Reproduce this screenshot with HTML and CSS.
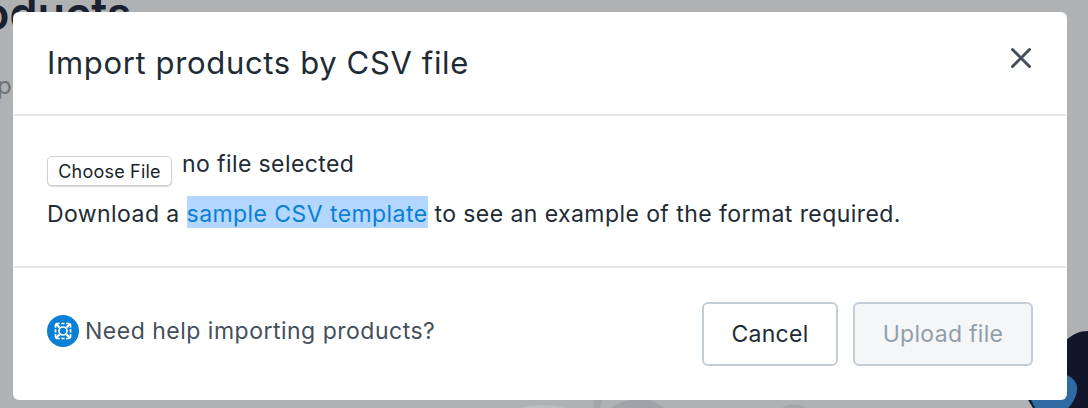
FILE: index.html
```html
<!DOCTYPE html>
<html lang="en">
<head>
<meta charset="utf-8">
<title>Import products by CSV file</title>
<link rel="stylesheet" href="styles.css">
</head>
<body>
<div class="backdrop" aria-hidden="true">
  <span class="bg-heading">oducts</span>
  <span class="bg-sub">p</span>
  <svg class="bg-art" viewBox="500 320 588 88" width="588" height="88">
    <path d="M1088 331 C1080 331 1072 334 1064 342 L1064 398 L1027 398 L1033 408 L1088 408 Z" fill="#12162a"/>
    <path d="M1060 372 C1072 376 1078 382 1077 390 C1076 398 1072 404 1068 408 L1035 408 L1030 398 Z" fill="#2f6aa3"/>
    <path d="M611 408 C620 401 632 399 640 399 C650 399 658 403 664 408 Z" fill="#a0a2a6"/>
    <path d="M782 408 C788 403 800 403 806 408 Z" fill="#a3a5a9"/>
    <path d="M593 398 H603 L600 408 H594 Z" fill="#a3a5a9"/>
    <path d="M520 408 C535 404 550 404 565 408 Z" fill="#bcbdbf"/>
  </svg>
</div>
<main class="modal">
  <header class="modal-head">
    <h1 class="modal-title">Import products by CSV file</h1>
    <button class="close" aria-label="Close">
      <svg viewBox="0 0 22 22" width="22" height="22"><path d="M2.5 2.5 L19.5 19.5 M19.5 2.5 L2.5 19.5" stroke="#454f5b" stroke-width="3" stroke-linecap="round" fill="none"/></svg>
    </button>
  </header>
  <section class="modal-body">
    <div class="file-row"><span class="file-btn">Choose File</span><span class="file-state">no file selected</span></div>
    <p class="hint">Download a <a class="link" href="#">sample CSV template</a> to see an example of the format required.</p>
  </section>
  <footer class="modal-foot">
    <div class="help">
      <svg class="help-icon" viewBox="0 0 32 32" width="32" height="32">
        <circle cx="16" cy="16" r="16" fill="#0a7fd6"/>
        <g fill="none" stroke="#fff" stroke-width="1.7">
          <circle cx="16" cy="16" r="4"/>
          <path d="M9.5 8.5 H22.5 M9.5 23.5 H22.5 M8.5 9.5 V22.5 M23.5 9.5 V22.5" stroke-dasharray="3.2 1.6"/>
          <path d="M8.5 8.5 L12.5 12.5 M23.5 8.5 L19.5 12.5 M8.5 23.5 L12.5 19.5 M23.5 23.5 L19.5 19.5" stroke-width="2.2"/>
        </g>
      </svg>
      <span class="help-text">Need help importing products?</span>
    </div>
    <div class="actions">
      <button class="btn">Cancel</button>
      <button class="btn btn-disabled" disabled>Upload file</button>
    </div>
  </footer>
</main>
</body>
</html>
```

FILE: styles.css
```css
* { box-sizing: border-box; }
html, body { margin: 0; height: 408px; overflow: hidden; }
body {
  background: #b0b1b3;
  font-family: Inter, "Liberation Sans", sans-serif;
  color: #212b36;
  padding: 12px 21px 8px 13px;
}
.backdrop { position: absolute; inset: 0; overflow: hidden; }
.bg-heading {
  position: absolute; left: -18px; top: -21px;
  font-size: 45px; font-weight: 600; color: #1b2030; line-height: 70px;
}
.bg-sub { position: absolute; left: -3px; top: 72px; font-size: 24px; line-height: 28px; color: #6f7278; }
.bg-art { position: absolute; right: 0; bottom: 0; display: block; }
.modal {
  position: relative;
  height: 388px;
  background: #fff;
  border-radius: 6px;
  display: flex;
  flex-direction: column;
}
.modal-head {
  height: 104px;
  padding: 0 34px;
  display: flex;
  align-items: center;
  justify-content: space-between;
  border-bottom: 2px solid #e6e7e8;
}
.modal-title { margin: 0; font-size: 31px; font-weight: 400; line-height: 40px; letter-spacing: .65px; }
.close { border: 0; background: none; padding: 0; display: flex; margin-right: 1px; margin-top: -10px; }
.modal-body {
  height: 152px;
  padding: 32px 34px 0;
  border-bottom: 2px solid #e6e7e8;
}
.file-row { display: flex; align-items: flex-start; height: 40px; }
.file-btn {
  margin-top: 8px;
  width: 125px; height: 30px;
  border: 1px solid #d0d1d3;
  border-radius: 5px;
  background: #fff;
  box-shadow: 0 1px 1px rgba(0,0,0,.15);
  font-size: 18px;
  letter-spacing: .2px;
  line-height: 30px;
  text-align: center;
  color: #1a1f26;
}
.file-state { margin-left: 10px; font-size: 23px; letter-spacing: .4px; line-height: 32px; }
.hint { margin: 8px 0 0; font-size: 23px; letter-spacing: .43px; line-height: 36px; }
.link { color: #0a7fd6; background: #b3d7ff; text-decoration: none; padding-top: 4px; }
.modal-foot {
  flex: 1;
  padding: 0 34px;
  display: flex;
  align-items: center;
  justify-content: space-between;
}
.help { display: flex; align-items: center; gap: 6px; margin-top: -6px; }
.help-icon { display: block; }
.help-text { font-size: 23px; letter-spacing: .5px; color: #454f5b; line-height: 30px; }
.actions { display: flex; gap: 15px; margin-top: -1px; }
.btn {
  height: 64px;
  width: 136px;
  border: 2px solid #c4cdd5;
  border-radius: 6px;
  background: #fff;
  font: inherit;
  font-size: 23px;
  letter-spacing: .3px;
  color: #212b36;
}
.btn-disabled { width: 180px; background: #f4f6f8; color: #919eab; }
```
